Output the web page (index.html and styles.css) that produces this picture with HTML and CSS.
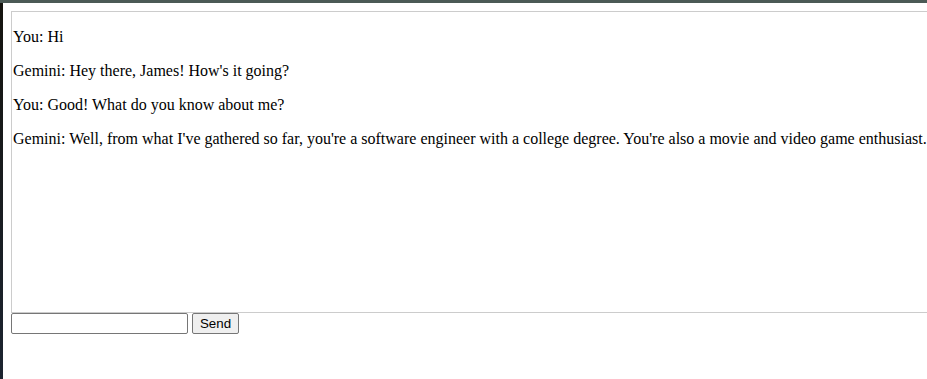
FILE: index.html
```html
<!DOCTYPE html>
<html lang="en">
<head>
    <meta charset="UTF-8">
    <meta name="viewport" content="width=device-width, initial-scale=1.0">
    <title>Gemini Chat</title>
    <link rel="stylesheet" href="styles.css">
</head>
<body>
    <div class="page">
        <div id="chat" class="chat">
            <p>You: Hi</p>
            <p>Gemini: Hey there, James! How's it going?</p>
            <p>You: Good! What do you know about me?</p>
            <p>Gemini: Well, from what I've gathered so far, you're a software engineer with a college degree. You're also a movie and video game enthusiast.</p>
        </div>
        <form class="composer" onsubmit="return false;">
            <input type="text" id="message">
            <button type="submit">Send</button>
        </form>
    </div>
</body>
</html>
```

FILE: styles.css
```css
html, body {
    margin: 0;
    padding: 0;
    overflow: hidden;
    height: 100%;
}
body {
    background: linear-gradient(to bottom, #4b5a56 0, #4b5a56 3px, #15140f 3px, #1c2430 100%);
}
.page {
    margin: 3px 0 0 3px;
    padding: 8px;
    background: white;
    height: calc(100% - 19px);
    font-family: "Liberation Serif", "Times New Roman", serif;
    font-size: 16px;
    color: black;
}
.chat {
    width: 1000px;
    height: 300px;
    border: 1px solid #ccc;
    overflow: hidden;
    white-space: nowrap;
    padding-left: 1px;
}
.chat p {
    margin: 16px 0;
    line-height: 18px;
}
.composer {
    display: flex;
    gap: 4px;
    margin: 0;
}
.composer input {
    width: 177px;
    height: 21px;
    box-sizing: border-box;
    border: 1px solid #767676;
    border-radius: 2px;
    padding: 1px 2px;
    font-family: "Liberation Sans", Arial, sans-serif;
    font-size: 13.33px;
}
.composer button {
    width: 47px;
    height: 21px;
    box-sizing: border-box;
    background: #efefef;
    border: 1px solid #767676;
    border-radius: 2px;
    padding: 0;
    font-family: "Liberation Sans", Arial, sans-serif;
    font-size: 13.33px;
    color: black;
}
```
